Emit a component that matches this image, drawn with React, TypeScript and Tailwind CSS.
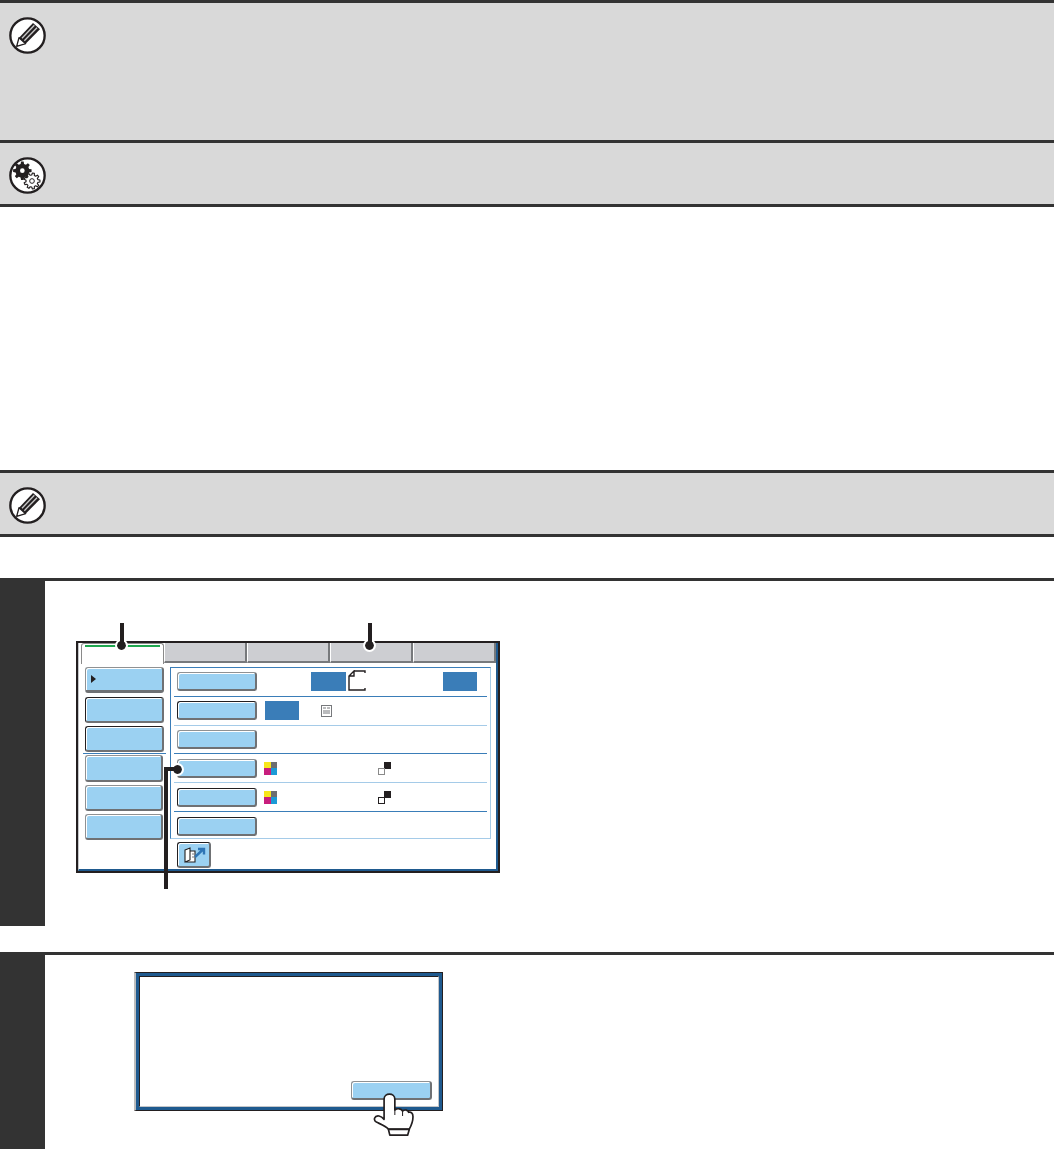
const dark = "bg-[#333333]";

function gearPath(cx: number, cy: number, outer: number, inner: number, teeth: number) {
  const pts: string[] = [];
  const step = (Math.PI * 2) / teeth;
  for (let i = 0; i < teeth; i++) {
    const a = i * step;
    const offs: [number, number][] = [
      [-0.32, inner],
      [-0.18, outer],
      [0.18, outer],
      [0.32, inner],
    ];
    offs.forEach(([o, r]) => {
      const t = a + o * step;
      pts.push(`${(cx + Math.cos(t) * r).toFixed(1)} ${(cy + Math.sin(t) * r).toFixed(1)}`);
    });
  }
  return `M${pts.join("L")}Z`;
}

function PencilIcon() {
  return (
    <svg viewBox="0 0 111 111" className="h-[37px] w-[37px] shrink-0">
      <circle cx="55.5" cy="55.5" r="51.5" fill="#fff" stroke="#231f20" strokeWidth="7" />
      <path d="M23 88 L30 62 L72 18 L93 37 L50 80 Z" fill="#231f20" />
      <path d="M23 88 L30 62 L50 80 Z" fill="#fff" stroke="#231f20" strokeWidth="4" strokeLinejoin="round" />
      <path d="M39 64 L76 25 M46 71 L84 32" stroke="#c9c9c9" strokeWidth="4" />
    </svg>
  );
}

function GearIcon() {
  return (
    <svg viewBox="0 0 111 111" className="h-[37px] w-[37px] shrink-0">
      <circle cx="55.5" cy="55.5" r="51.5" fill="#fff" stroke="#231f20" strokeWidth="7" />
      <path d={gearPath(40, 41, 28, 21, 8)} fill="#231f20" />
      <circle cx="40" cy="41" r="7" fill="#fff" />
      <path d={gearPath(69, 72, 24, 18, 9)} fill="#fff" stroke="#231f20" strokeWidth="3.5" strokeLinejoin="round" />
      <circle cx="69" cy="72" r="7" fill="#fff" stroke="#231f20" strokeWidth="3" />
    </svg>
  );
}

function NoteBox({ height, gear }: { height: string; gear?: boolean }) {
  return (
    <div className={`flex items-start bg-[#d9d9d9] pl-[9px] pt-[14px] ${height}`}>
      {gear ? <GearIcon /> : <PencilIcon />}
    </div>
  );
}

function Rule() {
  return <div className={`h-[3px] ${dark}`} />;
}

function KeyButton({ className, strong }: { className: string; strong?: boolean }) {
  return (
    <div
      className={`rounded-[3px] border border-b-[2px] border-r-[2px] border-b-[#6f7174] border-r-[#6f7174] bg-[#9bd1f2] shadow-[inset_1px_1px_0_#fff] ${
        strong ? "border-l-[#231f20] border-t-[#231f20]" : "border-l-[#8f9193] border-t-[#8f9193]"
      } ${className}`}
    />
  );
}

function ColorChip() {
  return (
    <span className="grid h-[13px] w-[13px] grid-cols-2 grid-rows-2">
      <span className="bg-[#f7e61c]" />
      <span className="bg-[#6d6e71]" />
      <span className="bg-[#c81e7d]" />
      <span className="bg-[#1b9ad6]" />
    </span>
  );
}

function BwChip({ strong }: { strong?: boolean }) {
  return (
    <span className="relative block h-[13px] w-[13px]">
      <span className="absolute right-0 top-0 h-[7px] w-[7px] bg-[#231f20]" />
      <span
        className={`absolute bottom-0 left-0 h-[7px] w-[7px] border bg-white ${strong ? "border-[#231f20]" : "border-[#8a8a8a]"}`}
      />
    </span>
  );
}

function Row({
  children,
  sep,
  strong,
}: {
  children?: React.ReactNode;
  sep?: "dark" | "light";
  strong?: boolean;
}) {
  return (
    <div
      className={`flex h-[28.8px] items-center ${
        sep === "dark"
          ? "border-b border-b-[#3a7db8]"
          : sep === "light"
            ? "border-b border-b-[#a5cbe8]"
            : ""
      }`}
    >
      <KeyButton strong={strong} className="ml-[3px] h-[19px] w-[80px] shrink-0" />
      {children}
    </div>
  );
}

function Dot({ className }: { className: string }) {
  return <div className={`absolute h-[9px] w-[9px] rounded-full bg-[#231f20] outline-2 outline-white ${className}`} />;
}

function CopyScreen() {
  return (
    <div className="relative ml-[31px] mt-[60px] h-[232px] w-[424px] border-2 border-[#231f20]">
      <div className="flex h-full flex-col border-b-2 border-l border-r-2 border-b-[#1f5a8f] border-l-[#c4c6c9] border-r-[#1f5a8f]">
        {/* tabs */}
        <div className="flex h-[20px] pl-[2px]">
          <div className="relative h-[21px] w-[83px] rounded-t-[3px] border-l border-r border-t border-[#8a8a8a] bg-white">
            <div className="mx-[3px] mt-[1px] h-[2px] bg-[#1fa74f]" />
          </div>
          {[0, 1, 2, 3].map((i) => (
            <div key={i} className="w-[83px] border-b-2 border-l border-r-2 border-[#77797c] border-l-white bg-[#cdced2]" />
          ))}
          <div className="flex-1 border-b-2 border-[#77797c]" />
        </div>
        <div className="flex flex-1 pt-[3px]">
          {/* side keys */}
          <div className="flex w-[91px] shrink-0 flex-col pl-[6px]">
            <KeyButton className="mt-px h-[26px] w-[79px] border-b-[3px]" />
            <KeyButton strong className="mt-[4px] h-[26px] w-[79px]" />
            <KeyButton strong className="mt-[3px] h-[26px] w-[79px]" />
            <KeyButton className="mt-[3px] h-[27px] w-[78px] border-r-0" />
            <KeyButton className="mt-[3px] h-[26px] w-[78px] border-r-0" />
            <KeyButton className="mt-[3px] h-[26px] w-[78px] border-r-0" />
          </div>
          {/* settings panel */}
          <div className="flex flex-1 flex-col pr-[5px] pt-px">
            <div className="h-[172px] border border-b-[#a5cbe8] border-l-[#3a7db8] border-r-[#a5cbe8] border-t-[#3a7db8] px-[3px]">
              <Row sep="dark">
                <div className="ml-[54px] h-[19px] w-[35px] bg-[#3a7db8]" />
                <svg viewBox="0 0 18 21" className="ml-[2px] h-[21px] w-[18px] -translate-y-[1px]">
                  <path d="M6 1 H17 V3 M17 18 V20 H1 V6 L6 1 V6 H1" fill="none" stroke="#231f20" strokeWidth="1.4" />
                </svg>
                <div className="ml-[77px] h-[19px] w-[34px] bg-[#3a7db8]" />
              </Row>
              <Row sep="light" strong>
                <div className="ml-[8px] h-[19px] w-[34px] bg-[#3a7db8]" />
                <svg viewBox="0 0 11 12" className="ml-[22px] h-[12px] w-[11px]">
                  <rect x="0.5" y="0.5" width="10" height="11" fill="#fff" stroke="#77797c" />
                  <path d="M2 3 H5 M6 3 H9 M2 6 H9 M2 8 H9" stroke="#77797c" strokeWidth="1" />
                </svg>
              </Row>
              <Row sep="dark" />
              <Row sep="light">
                <div className="ml-[7px]"><ColorChip /></div>
                <div className="ml-[101px]"><BwChip /></div>
              </Row>
              <Row sep="dark" strong>
                <div className="ml-[7px]"><ColorChip /></div>
                <div className="ml-[101px]"><BwChip strong /></div>
              </Row>
              <Row strong />
            </div>
            <div className="pl-[7px] pt-[3px]">
              <div className="flex h-[26px] w-[34px] items-center justify-center rounded-[3px] border border-b-[2px] border-r-[2px] border-[#231f20] border-b-[#6f7174] border-r-[#6f7174] bg-[#9bd1f2] shadow-[inset_1px_1px_0_#fff]">
                <svg viewBox="0 0 24 18" className="h-[18px] w-[24px]">
                  <path d="M3 4 L8 2 V14 L3 16 Z M8 5 H13 V16 H3" fill="#fff" stroke="#231f20" strokeWidth="1.1" />
                  <path d="M10 8 H12 M10 11 H12" stroke="#77797c" strokeWidth="1" />
                  <path d="M13 11 L21 3.5 M16 3 H22 V8.5" fill="none" stroke="#2f75b5" strokeWidth="2.4" />
                </svg>
              </div>
            </div>
          </div>
        </div>
      </div>

      {/* divider across the side keys */}
      <div className="absolute left-[5px] top-[110px] h-px w-[83px] bg-[#3a7db8]" />

      {/* arrow on first side key */}
      <span className="absolute left-[13px] top-[32px] h-0 w-0 border-y-[4.5px] border-l-[5px] border-y-transparent border-l-[#231f20]" />

      {/* leader lines */}
      <Dot className="left-[39px] top-[-2.5px]" />
      <div className="absolute left-[42px] top-[-20px] h-[22px] w-[4px] bg-[#231f20]" />
      <Dot className="left-[287px] top-[-2.5px]" />
      <div className="absolute left-[290px] top-[-20px] h-[22px] w-[4px] bg-[#231f20]" />
      <Dot className="left-[95px] top-[121.5px]" />
      <div className="absolute left-[86px] top-[124px] h-[122px] w-[4px] bg-[#231f20]" />
      <div className="absolute left-[86px] top-[124px] h-[4px] w-[12px] bg-[#231f20]" />
    </div>
  );
}

function DialogScreen() {
  return (
    <div className="relative ml-[89px] mt-[17px] h-[139px] w-[309px] border border-[#231f20] border-l-2 border-l-[#bdbdbd]">
      <div className="h-full border-[3px] border-[#1f5a8f]">
        <div className="flex h-full items-end justify-end border border-b-[#c4c6c9] border-l-[#231f20] border-r-[#c4c6c9] border-t-[#231f20] bg-white pb-[6px] pr-[6px]">
          <KeyButton className="h-[19px] w-[81px]" />
        </div>
      </div>
      <svg viewBox="130 100 125 130" className="absolute left-[237px] top-[120px] h-[44px] w-[42px]">
        <path
          d="M163 178 V118 C163 98 195 98 195 118 V150 C203 144 214 146 218 153 C225 148 234 150 236 157 C243 155 249 160 249 170 C249 186 244 196 238 207 H176 C168 198 152 192 140 186 C130 180 134 166 148 168 C154 169 159 173 163 178 Z"
          fill="#fff"
          stroke="#231f20"
          strokeWidth="5"
          strokeLinejoin="round"
        />
        <path d="M176 208 H238 L233 225 H180 Z" fill="#fff" stroke="#231f20" strokeWidth="5" strokeLinejoin="round" />
        <path d="M195 150 V165 M218 153 V168" fill="none" stroke="#231f20" strokeWidth="3" />
      </svg>
    </div>
  );
}

function StepBlock({ height, children }: { height: string; children: React.ReactNode }) {
  return (
    <div className={`flex ${height}`}>
      <div className={`w-[45px] shrink-0 ${dark}`} />
      <div className="flex-1">
        <Rule />
        {children}
      </div>
    </div>
  );
}

export default function App() {
  return (
    <div className="h-[1149px] w-[1054px] overflow-hidden bg-white">
      <Rule />
      <NoteBox height="h-[137px]" />
      <Rule />
      <NoteBox height="h-[61px]" gear />
      <Rule />
      <div className="h-[263px]" />
      <Rule />
      <NoteBox height="h-[61px]" />
      <Rule />
      <div className="h-[41px]" />
      <StepBlock height="h-[348px]">
        <CopyScreen />
      </StepBlock>
      <div className="h-[26px]" />
      <StepBlock height="h-[197px]">
        <DialogScreen />
      </StepBlock>
    </div>
  );
}
